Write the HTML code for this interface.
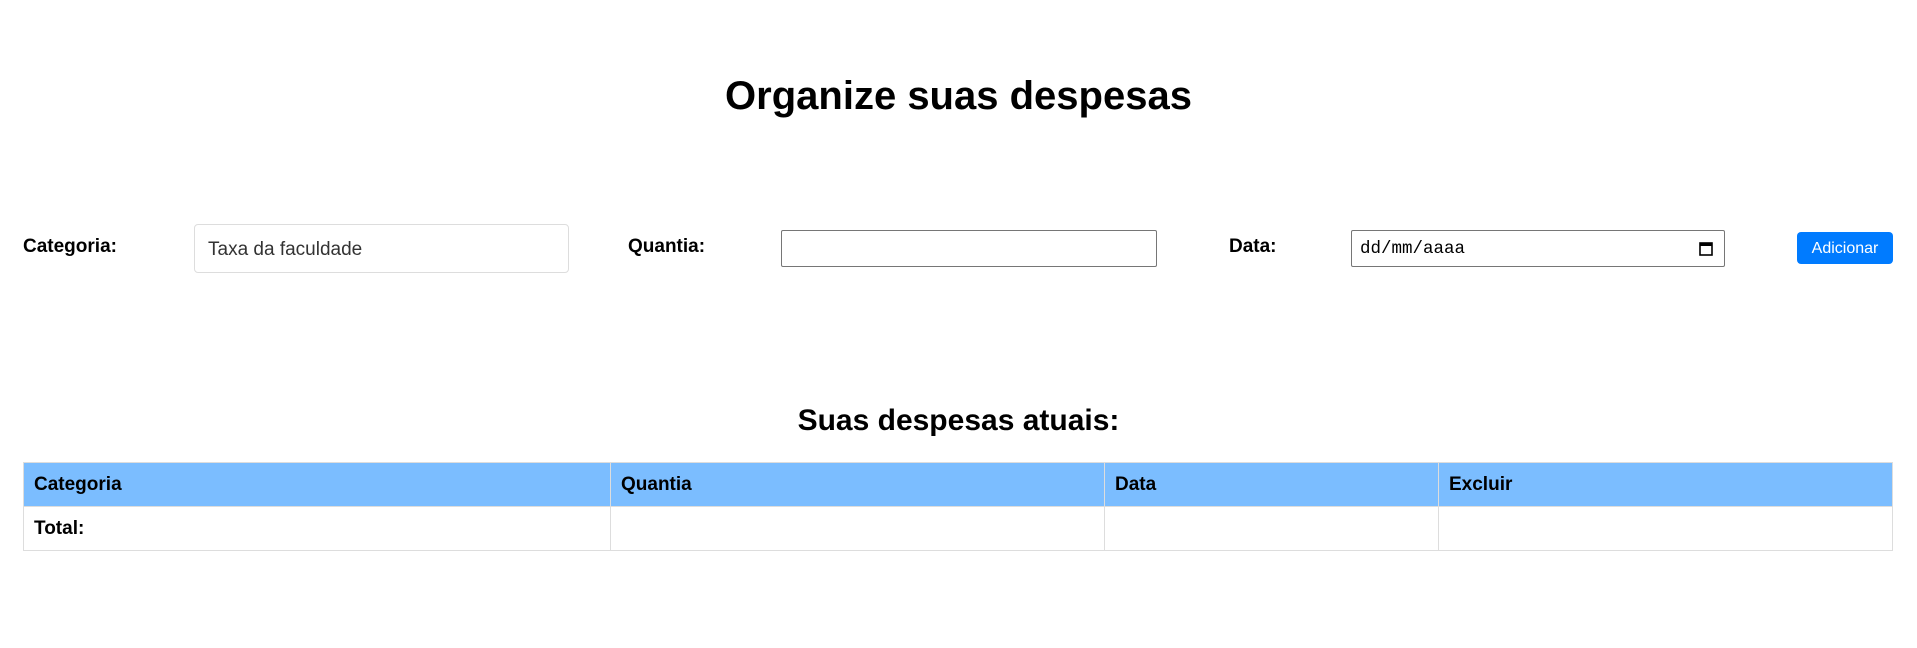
<!DOCTYPE html>
<html><head><meta charset="utf-8"><style>
body{margin:0;width:1917px;height:648px;background:#fff;font-family:"Liberation Sans",Arial,sans-serif;position:relative;overflow:hidden}
.a{position:absolute}
h1{position:absolute;margin:0;left:0;width:1917px;text-align:center;top:72px;font-size:40px;line-height:48px}
h2{position:absolute;margin:0;left:0;width:1917px;text-align:center;top:403px;font-size:30px;line-height:36px}
.lbl{font-weight:bold;font-size:19px;top:236px}
.inp{box-sizing:border-box}
table{position:absolute;left:23px;top:462px;width:1870px;border-collapse:collapse;font-size:19px}
td,th{border:1px solid #ddd;text-align:left;padding:0 10px;height:44px;box-sizing:border-box}
th{background:#7bbdff}
td{font-weight:bold}
</style></head><body>
<h1>Organize suas despesas</h1>
<div class="a lbl" style="left:23px">Categoria:</div>
<div class="a inp" style="left:194px;top:224px;width:375px;height:49px;border:1px solid #ddd;border-radius:4px;font-size:19px;color:#333;padding:14px 0 0 13px">Taxa da faculdade</div>
<div class="a lbl" style="left:628px">Quantia:</div>
<div class="a inp" style="left:781px;top:230px;width:376px;height:37px;border:1px solid #767676;border-radius:2px"></div>
<div class="a lbl" style="left:1229px">Data:</div>
<div class="a inp" style="left:1351px;top:230px;width:374px;height:37px;border:1px solid #767676;border-radius:2px;font-family:'Liberation Mono',monospace;font-size:17.5px;padding:8px 0 0 8px">dd/mm/aaaa
<svg style="position:absolute;right:10px;top:9px" width="16" height="17" viewBox="0 0 16 17"><rect x="2" y="3" width="12" height="12" fill="none" stroke="#000" stroke-width="1.6"/><rect x="2" y="3" width="12" height="3" fill="#000"/></svg></div>
<div class="a" style="left:1797px;top:232px;width:96px;height:32px;background:#007bff;border-radius:4px;color:#fff;font-size:16px;line-height:33px;text-align:center">Adicionar</div>
<h2>Suas despesas atuais:</h2>
<table><tr><th style="width:587px">Categoria</th><th style="width:494px">Quantia</th><th style="width:334px">Data</th><th>Excluir</th></tr>
<tr><td>Total:</td><td></td><td></td><td></td></tr></table>
</body></html>
